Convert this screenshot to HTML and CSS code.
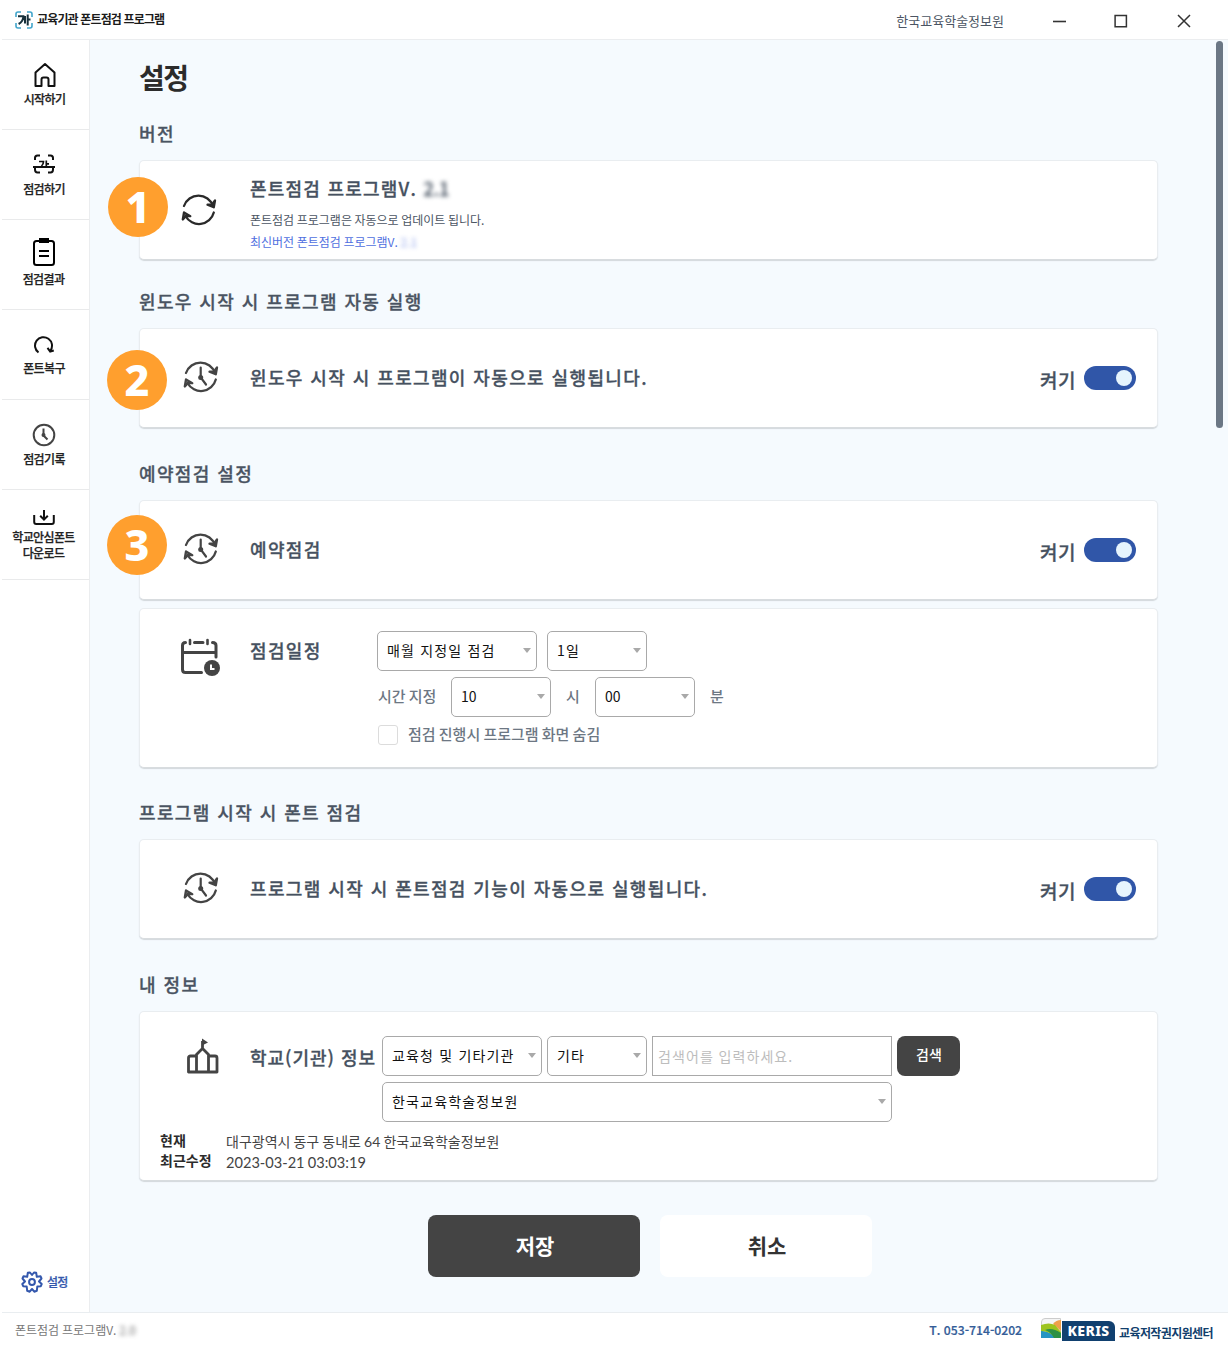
FILE: index.html
```html
<!DOCTYPE html>
<html lang="ko">
<head>
<meta charset="utf-8">
<title>교육기관 폰트점검 프로그램</title>
<link rel="stylesheet" href="styles.css">
</head>
<body>
<svg width="0" height="0" class="defs">
  <symbol id="cycle" viewBox="0 0 36 36">
    <g fill="none" stroke="currentColor" stroke-width="2.3" stroke-linecap="round" stroke-linejoin="round">
      <path d="M3 14A15.300 15.300 0 0 1 32 14M32.800 20.500A15.300 15.300 0 0 1 4.500 24"/>
      <path d="M34 8.500L32.800 15.300L26.500 12.600L31 12.500ZM1.800 27.500L3 20.500L9.300 24.200L5 24Z"/>
    </g>
  </symbol>
  <symbol id="cycle-clock" viewBox="0 0 36 36">
    <use href="#cycle"/>
    <path d="M17.700 8.500V18.500L23 25.500" fill="none" stroke="currentColor" stroke-width="2.200" stroke-linecap="round"/>
    <circle cx="17.700" cy="18.500" r="2.500" fill="currentColor"/>
  </symbol>
</svg>
<div class="window">
  <header class="titlebar">
    <svg class="logo" width="18" height="18" viewBox="0 0 18 18" fill="none">
      <path d="M1 6V3Q1 1 3 1H6M12 1H15Q17 1 17 3V6M17 12V15Q17 17 15 17H12M6 17H3Q1 17 1 15V12" stroke="#42a5cb" stroke-width="1.6"/>
      <path d="M3 5.200H8.400Q8.300 10.500 3.600 13M12.700 3.500V14.500M12.700 8.500H15.500M10 5V12.500" stroke="#17303a" stroke-width="2"/>
    </svg>
    <span class="app-name">교육기관 폰트점검 프로그램</span>
    <span class="org">한국교육학술정보원</span>
    <svg class="winbtns" width="140" height="16" viewBox="0 0 140 16" fill="none" stroke="#333">
      <path d="M1 8.500H14" stroke-width="1.600"/>
      <path d="M63.100 2.600H74.400V13.800H63.100Z" stroke-width="1.500"/>
      <path d="M126 2L138 14M138 2L126 14" stroke-width="1.500"/>
    </svg>
  </header>
  <div class="middle">
    <nav class="sidebar">
      <a class="item home">
        <svg width="24" height="26" viewBox="0 0 24 26" fill="none" stroke="#111" stroke-width="2" stroke-linejoin="round"><path d="M2.500 10.500L12 2L21.500 10.500V24H15.500V17.500Q15.500 15.500 13.500 15.500H10.500Q8.500 15.500 8.500 17.500V24H2.500Z"/></svg>
        <span>시작하기</span>
      </a>
      <a class="item scan">
        <svg width="22" height="20" viewBox="0 0 22 20" fill="none" stroke="#111" stroke-width="2"><path d="M2 6V4Q2 1.500 4.500 1.500H7M15 1.500H17.500Q20 1.500 20 4V6M2 13.500V15.500Q2 18.500 4.500 18.500H7M15 18.500H17.500Q20 18.500 20 15.500V13.500M0 13H22"/><path d="M6 7.500H10.500Q10.500 10 8.500 12M13.300 6.500V13M13.300 9.800H16" stroke-width="1.700"/></svg>
        <span>점검하기</span>
      </a>
      <a class="item result">
        <svg width="24" height="28" viewBox="0 0 24 28" fill="none" stroke="#000" stroke-width="2"><rect x="2" y="3" width="20" height="24" rx="2.500"/><path d="M7 2.500H17" stroke-width="5"/><path d="M7 13H17M7 18H17" stroke-width="2"/></svg>
        <span>점검결과</span>
      </a>
      <a class="item restore">
        <svg width="22" height="18" viewBox="0 0 22 18" fill="none" stroke="#111" stroke-width="2"><path d="M5.500 16.500A8.500 8.500 0 1 1 17.500 14.500M14.500 11.800L17.200 15.500L20.800 14.500"/></svg>
        <span>폰트복구</span>
      </a>
      <a class="item history">
        <svg width="24" height="24" viewBox="0 0 24 24" fill="none" stroke="#444" stroke-width="2"><circle cx="12" cy="12" r="10.300"/><path d="M11.500 5.500V12.500L15.500 16.500"/><circle cx="11.500" cy="12" r="1" fill="#444"/></svg>
        <span>점검기록</span>
      </a>
      <a class="item download">
        <svg width="22" height="16" viewBox="0 0 22 16" fill="none" stroke="#111" stroke-width="2"><path d="M1.200 5V12Q1.200 14 3.200 14H18.800Q20.800 14 20.800 12V5M11 0V9.500M7.200 5.800L11 9.600L14.800 5.800"/></svg>
        <span>학교안심폰트<br>다운로드</span>
      </a>
      <a class="settings">
        <svg width="22" height="22" viewBox="-11 -11 22 22" fill="none" stroke="#3458ad" stroke-width="2" stroke-linejoin="round">
          <path d="M-4.200 -9.200L-2 -9.500L0 -7L2 -9.500L4.200 -9.200L4.800 -5.200L8.500 -5.800L9.500 -3.500L7 -.5L9.700 2L8.800 4.200L5.300 4.500L4.800 8.800L2.300 9.700L0 7L-2.300 9.700L-4.800 8.800L-5.300 4.500L-8.800 4.200L-9.700 2L-7 -.5L-9.500 -3.500L-8.500 -5.800L-4.800 -5.200Z"/>
          <circle r="2.900"/>
        </svg>
        <span>설정</span>
      </a>
    </nav>
    <main class="content">
      <h1>설정</h1>

      <section>
        <h2>버전</h2>
        <div class="card version">
          <b class="badge b1">1</b>
          <svg class="icon" width="36" height="36"><use href="#cycle"/></svg>
          <div class="lines">
            <p class="label">폰트점검 프로그램V. <span class="smudge">2.1</span></p>
            <p class="note">폰트점검 프로그램은 자동으로 업데이트 됩니다.</p>
            <p class="note latest">최신버전 폰트점검 프로그램V. <span class="smudge">2.1</span></p>
          </div>
        </div>
      </section>

      <section class="autostart">
        <h2>윈도우 시작 시 프로그램 자동 실행</h2>
        <div class="card">
          <b class="badge b2">2</b>
          <svg class="icon" width="36" height="36"><use href="#cycle-clock"/></svg>
          <p class="label">윈도우 시작 시 프로그램이 자동으로 실행됩니다.</p>
          <span class="on">켜기</span><span class="toggle"></span>
        </div>
      </section>

      <section class="reserve">
        <h2>예약점검 설정</h2>
        <div class="card">
          <b class="badge b3">3</b>
          <svg class="icon" width="36" height="36"><use href="#cycle-clock"/></svg>
          <p class="label">예약점검</p>
          <span class="on">켜기</span><span class="toggle"></span>
        </div>
        <div class="card schedule">
          <svg class="icon cal" width="40" height="40" viewBox="0 0 40 40" fill="none" stroke="#444" stroke-width="3" stroke-linecap="round">
            <path d="M5.500 5.500Q2.500 5.500 2.500 8.500V32.500Q2.500 35.500 5.500 35.500H21.500M14.500 5.500H23M32.500 5.500Q36 5.500 36 8.500V20M3 15.500H36"/>
            <path d="M10 3V7M27.500 3V7" stroke-width="2.600"/>
            <circle cx="32" cy="31" r="8" fill="#444" stroke="none"/><path d="M31 27.500V32H34.500" stroke="#fff" stroke-width="2" stroke-linecap="butt"/>
          </svg>
          <p class="label">점검일정</p>
          <div class="form">
            <div class="row"><span class="select w160">매월 지정일 점검</span><span class="select w100">1일</span></div>
            <div class="row time"><span class="t1">시간 지정</span><span class="select w100 n">10</span><span class="t2">시</span><span class="select w100 n">00</span><span class="t3">분</span></div>
            <div class="row check"><i class="box"></i><span>점검 진행시 프로그램 화면 숨김</span></div>
          </div>
        </div>
      </section>

      <section class="startup">
        <h2>프로그램 시작 시 폰트 점검</h2>
        <div class="card">
          <svg class="icon" width="36" height="36"><use href="#cycle-clock"/></svg>
          <p class="label">프로그램 시작 시 폰트점검 기능이 자동으로 실행됩니다.</p>
          <span class="on">켜기</span><span class="toggle"></span>
        </div>
      </section>

      <section class="mine">
        <h2>내 정보</h2>
        <div class="card info">
          <div class="school">
            <svg class="icon" width="34" height="36" viewBox="0 0 34 36" fill="none" stroke="#444" stroke-width="2.800" stroke-linejoin="round">
              <path d="M10.500 34V16.500L16.500 10.500L22.500 16.500V34M10.500 18H4.500Q2.500 18 2.500 20V34H31V20Q31 18 29 18H22.500M16.500 11V3"/>
              <path d="M16 .5L22 4.500L16 7.500Z" fill="#444" stroke="none"/>
            </svg>
            <p class="label">학교(기관) 정보</p>
            <div class="form">
              <div class="row"><span class="select w160">교육청 및 기타기관</span><span class="select w100">기타</span><span class="search">검색어를 입력하세요.</span><span class="find">검색</span></div>
              <div class="row"><span class="select w510">한국교육학술정보원</span></div>
            </div>
          </div>
          <dl>
            <dt>현재</dt><dd>대구광역시 동구 동내로 64 한국교육학술정보원</dd>
            <dt>최근수정</dt><dd class="date">2023-03-21 03:03:19</dd>
          </dl>
        </div>
      </section>

      <div class="actions"><span class="save">저장</span><span class="cancel">취소</span></div>
      <i class="scrollbar"></i>
    </main>
  </div>
  <footer class="footer">
    <span class="ver">폰트점검 프로그램V. <span class="smudge">2.0</span></span>
    <span class="tel">T. 053-714-0202</span>
    <svg class="mark" width="20" height="20" viewBox="0 0 20 20">
      <path d="M.5 20V4Q.5 .5 4 .5H19.500V20Z" fill="#f4f5f5" stroke="#ccc"/>
      <path d="M12 6Q15 2 20 2V13Z" fill="#f0a04b"/>
      <path d="M0 13Q8 12 16 20H0Z" fill="#2795c4"/>
      <path d="M0 7Q8 4 14 7L20 14V20H14Q9 13 0 13Z" fill="#9dc41f"/>
      <path d="M4 12Q11 9 20 15V20H13Q10 14 4 12Z" fill="#2d9145"/>
    </svg>
    <span class="keris">KERIS</span>
    <span class="center">교육저작권지원센터</span>
  </footer>
</div>
</body>
</html>
```
FILE: styles.css
```css
* { box-sizing: border-box; }
body, h1, h2, p, dl, dd { margin: 0; }
body { background: #fff; font-family: "Noto Sans CJK KR", sans-serif; color: #2b2b2b; }
.defs { position: absolute; }
svg { display: block; flex: none; }
span, p, h1, h2, dt, dd { white-space: nowrap; }

.window { width: 1230px; height: 1348px; display: flex; flex-direction: column; padding: 0 2px; overflow: hidden; }
.titlebar { height: 40px; flex: none; display: flex; align-items: center; border-bottom: 1px solid #ebedef; padding: 0 36px 0 13px; }
.logo { margin-right: 4px; }
.app-name { font-size: 12px; font-weight: 700; letter-spacing: -.85px; color: #1b1b1b; flex: 1; line-height: 20px; margin-top: -2px; }
.org { font-size: 13px; color: #4b5563; margin: 3px 48px 0 0; line-height: 20px; }
.winbtns { margin-top: 2px; }

.middle { display: flex; height: 1272px; flex: none; }
.sidebar { width: 88px; flex: none; border-right: 1px solid #ebedef; display: flex; flex-direction: column; }
.item { height: 90px; flex: none; border-bottom: 1px solid #e9eaeb; display: flex; flex-direction: column; align-items: center; padding-top: 22px; font-size: 12px; font-weight: 500; letter-spacing: -.65px; line-height: 16px; text-align: center; color: #222; -webkit-text-stroke: .25px; }
.item span { margin-top: 3px; }
.item.home { padding-right: 2px; }
.item.scan { padding: 24px 3px 0 0; }
.item.scan span { margin-top: 7px; }
.item.result { padding: 18px 4px 0 0; }
.item.result span { margin-top: 5px; }
.item.restore { padding: 26px 3px 0 0; }
.item.restore span { margin-top: 6px; }
.item.history { padding: 23px 3px 0 0; }
.item.history span { margin-top: 4px; }
.item.download { padding: 20px 4px 0 0; }
.item.download span { margin-top: 3px; }
.settings { margin: auto 0 19px 19px; display: flex; align-items: center; gap: 4px; font-size: 12px; font-weight: 500; letter-spacing: -.8px; line-height: 20px; color: #3458ad; -webkit-text-stroke: .25px; }

.content { position: relative; flex: 1; background: #f5fafe; padding: 0 70px 0 49px; }
h1 { font-size: 28px; letter-spacing: -1.500px; font-weight: 700; line-height: 55px; height: 66px; padding-top: 10px; }
h2 { font-size: 18px; font-weight: 500; letter-spacing: 1.350px; word-spacing: .2px; line-height: 54px; height: 54px; color: #4a5462; -webkit-text-stroke: .3px; }
.autostart { margin-top: 14px; }
.reserve, .mine { margin-top: 18px; }
.startup { margin-top: 17px; }
.card { position: relative; height: 100px; background: #fff; border: 1px solid #e9edf0; border-bottom-color: #d8dcdf; box-shadow: 0 1px 1px #d3d8dc; border-radius: 5px; display: flex; align-items: center; padding: 0 21px 0 43px; }
.card .icon { color: #444; margin-right: 31px; margin-top: -2px; }
.version { padding-left: 41px; }
.version .icon { color: #2a2a2a; margin-right: 33px; margin-top: 0; }
.label { font-size: 18px; font-weight: 500; letter-spacing: 1.350px; word-spacing: .2px; line-height: 26px; margin-top: -2px; color: #465160; -webkit-text-stroke: .3px; }
.lines { padding-top: 8px; }
.lines .note { font-size: 12px; line-height: 22px; word-spacing: -.8px; color: #4b5563; }
.lines .label { letter-spacing: 1.200px; margin: 0 0 8px; }
.lines .latest { color: #4f6fe0; }
.smudge { display: inline-block; filter: blur(2px); letter-spacing: 0; }
.latest .smudge { opacity: .6; }
.on { margin-left: auto; margin-right: 8px; font-size: 19px; font-weight: 500; letter-spacing: .5px; color: #465160; padding-top: 3px; -webkit-text-stroke: .3px; }
.toggle { width: 52px; height: 24px; border-radius: 12px; background: #3056a8; display: flex; align-items: center; justify-content: flex-end; padding-right: 4px; }
.toggle::after { content: ""; width: 16px; height: 16px; border-radius: 50%; background: #e6f4fd; }
.badge { position: absolute; left: -33px; width: 60px; height: 60px; border-radius: 50%; background: #ff9f2e; color: #fff; font: 800 43px/60px "Noto Sans", sans-serif; text-align: center; }
.b1 { left: -32px; top: 16px; }
.b2 { top: 21px; }
.b3 { top: 14px; }

.schedule { height: 160px; margin-top: 8px; align-items: flex-start; padding: 22px 0 0 40px; }
.schedule .icon { margin: 6px 30px 0 0; }
.schedule .label { margin-top: 6px; width: 127px; }
.row { display: flex; align-items: center; height: 40px; margin-bottom: 6px; }
.schedule .row:first-child { gap: 10px; }
.select { position: relative; height: 40px; border: 1px solid #a9a9a9; border-radius: 5px; background: #fff; display: flex; align-items: center; justify-content: space-between; padding: 0 5px 2px 9px; font-size: 14px; letter-spacing: 1.180px; color: #111; line-height: 20px; }
.select::after { content: ""; border: 4.500px solid transparent; border-top: 5px solid #a9a9a9; border-bottom: 0; }
.n { letter-spacing: 0; }
.w160 { width: 160px; } .w100 { width: 100px; } .w510 { width: 510px; }
.time, .check { font-size: 15px; font-weight: 500; color: #6d7783; word-spacing: -1px; }
.time > span:not(.select), .check span { margin-top: -3px; }
.time .select { font-weight: 400; font-size: 14px; }
.t1 { width: 74px; padding-left: 1px; }
.t2 { width: 44px; padding-left: 15px; }
.t3 { padding-left: 15px; }
.schedule .check { height: 24px; }
.box { width: 20px; height: 20px; border: 1px solid #dcdcdc; border-radius: 3px; margin: 0 10px 0 1px; }

.info { height: 170px; display: block; padding: 0; }
.school { display: flex; padding: 24px 0 0 46px; height: 118px; }
.school .icon { margin: 2px 30px 0 0; }
.school .label { width: 132px; margin-top: 8px; letter-spacing: .950px; }
.school .row { gap: 5px; }
.search { width: 240px; height: 40px; border: 1px solid #a9a9a9; padding-left: 5px; font-size: 14px; letter-spacing: 1.100px; word-spacing: -.5px; line-height: 38px; color: #bdbdbd; }
.find { width: 63px; height: 40px; border-radius: 8px; background: #444; color: #fff; font-size: 14px; font-weight: 500; line-height: 36px; text-align: center; padding-left: 1px; }
dl { display: grid; grid-template-columns: 66px auto; grid-auto-rows: 20px; padding-left: 20px; font-size: 14px; line-height: 20px; margin-top: 2px; }
dt { font-weight: 700; margin-top: -2px; }
dd { font-family: Lato, "Noto Sans CJK KR", sans-serif; color: #444; word-spacing: -.5px; }
.date { font-size: 14.600px; padding-top: 1px; }

.actions { display: flex; gap: 20px; margin: 34px 0 0 289px; }
.actions span { width: 212px; height: 62px; border-radius: 8px; text-align: center; font-size: 21px; font-weight: 700; line-height: 60px; padding-left: 2px; }
.save { background: #444; color: #fff; }
.cancel { background: #fff; color: #333; }
.scrollbar { position: absolute; right: 5px; top: 1px; width: 7px; height: 387px; border-radius: 4px; background: #6b7785; }

.footer { flex: 1; border-top: 1px solid #e9edf0; display: flex; align-items: center; padding: 0 15px 2px 13px; }
.ver { font-size: 12px; color: #777; flex: 1; word-spacing: -.5px; }
.tel { font-size: 12.200px; font-weight: 500; color: #345d98; margin-right: 19px; -webkit-text-stroke: .2px; }
.mark { margin: -4px 1px 0 0; }
.keris { width: 53px; height: 20px; background: #11406f; border-top-right-radius: 6px; color: #fff; font: 800 14px/20px "Noto Sans", sans-serif; letter-spacing: .4px; text-align: center; margin: 2px 4px 0 0; }
.center { font-size: 12px; letter-spacing: -.6px; font-weight: 700; color: #123f6d; margin-top: 5px; }
```
